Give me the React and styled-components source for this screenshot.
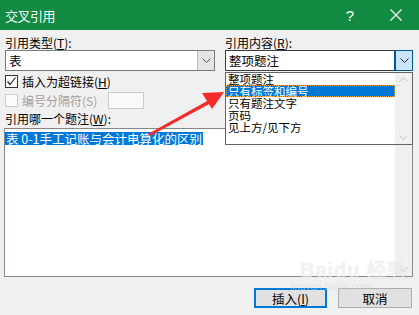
import React from 'react'
import styled, { createGlobalStyle } from 'styled-components'

const GlobalStyle = createGlobalStyle`
  html, body {
    margin: 0;
    padding: 0;
    background: #f0f0f0;
  }
  body {
    font-family: "Noto Sans CJK SC", "Microsoft YaHei", sans-serif;
  }
`

const Dialog = styled.div`
  position: relative;
  width: 419px;
  height: 315px;
  background: #f0f0f0;
  overflow: hidden;
  font-size: 12px;
  color: #000;
`

const TitleBar = styled.div`
  display: flex;
  align-items: center;
  height: 30px;
  background: #138a42;
  color: #fff;
  padding-left: 5px;
`

const TitleText = styled.div`
  flex: 1;
  font-size: 13px;
  letter-spacing: -0.5px;
`

const TitleButton = styled.div`
  width: 46px;
  height: 30px;
  display: flex;
  align-items: center;
  justify-content: center;
  font-family: "Liberation Sans", sans-serif;
  font-size: 15px;
`

const Body = styled.div`
  padding: 6px 6px 0 4px;
  display: flex;
  flex-direction: column;
`

const TopRow = styled.div`
  display: grid;
  grid-template-columns: 211px 188px;
  column-gap: 10px;
`

const Column = styled.div`
  position: relative;
  display: flex;
  flex-direction: column;
`

const Label = styled.div`
  height: 14px;
  line-height: 14px;
  padding-left: ${({ $indent }) => $indent || 0}px;
  margin-top: ${({ $top }) => $top || 0}px;
  white-space: nowrap;
  color: ${({ $disabled }) => ($disabled ? '#a0a0a0' : '#000')};
`

const Combo = styled.div`
  display: flex;
  height: 21px;
  box-sizing: border-box;
  margin-left: ${({ $indent }) => $indent || 0}px;
  border: 1px solid ${({ $focused }) => ($focused ? '#3c3c3c' : '#7a7a7a')};
  background: #fff;
`

const ComboValue = styled.div`
  flex: 1;
  padding-left: 3px;
  line-height: 19px;
  font-size: 12.5px;
`

const ComboButton = styled.div`
  width: 17px;
  display: flex;
  align-items: center;
  justify-content: center;
  box-sizing: border-box;
  background: ${({ $active }) => ($active ? '#cce4f7' : '#e5e5e5')};
  border-left: 1px solid ${({ $active }) => ($active ? '#005499' : '#b9b9b9')};
  outline: ${({ $active }) => ($active ? '1px solid #005499' : 'none')};
`

const Popup = styled.div`
  position: absolute;
  top: 36px;
  left: 0;
  width: 188px;
  height: 73px;
  box-sizing: border-box;
  border: 1px solid #646464;
  background: #fff;
  display: flex;
  z-index: 2;
`

const PopupItems = styled.div`
  flex: 1;
  display: flex;
  flex-direction: column;
`

const PopupItem = styled.div`
  height: 12px;
  line-height: 12px;
  padding-left: 2px;
  font-size: 11.5px;
  box-sizing: border-box;
  white-space: nowrap;
  background: ${({ $selected }) => ($selected ? '#0078d7' : 'transparent')};
  color: ${({ $selected }) => ($selected ? '#fff' : '#000')};
  outline: ${({ $selected }) => ($selected ? '1px dotted #f7a13a' : 'none')};
  outline-offset: -1px;
`

const ScrollBar = styled.div`
  width: 17px;
  background: #f0f0f0;
  display: flex;
  flex-direction: column;
  justify-content: ${({ $onlyDown }) => ($onlyDown ? 'flex-end' : 'space-between')};
  align-items: center;
  padding: 4px 0;
  box-sizing: border-box;
`

const CheckRow = styled.div`
  display: flex;
  align-items: center;
  height: ${({ $h }) => $h}px;
  margin-top: ${({ $top }) => $top}px;
  padding-left: 1px;
`

const Box = styled.div`
  width: 13px;
  height: 13px;
  box-sizing: border-box;
  border: 1px solid ${({ $disabled }) => ($disabled ? '#cccccc' : '#333')};
  background: ${({ $disabled }) => ($disabled ? '#fcfcfc' : '#fff')};
  display: flex;
  align-items: center;
  justify-content: center;
  margin-right: 4px;
`

const SepInput = styled.div`
  width: 36px;
  height: 17px;
  box-sizing: border-box;
  margin-left: 11px;
  border: 1px solid #cccccc;
  background: #f9f9f9;
`

const ListBox = styled.div`
  display: flex;
  height: 149px;
  margin-top: 2px;
  box-sizing: border-box;
  border: 1px solid #828790;
  background: #fff;
`

const ListItems = styled.div`
  flex: 1;
  padding: 1px 0 0 0;
`

const ListItem = styled.span`
  display: inline-block;
  height: 13px;
  line-height: 13px;
  padding: 0 1px;
  font-size: 12.5px;
  background: #0078d7;
  color: #fff;
  white-space: pre;
`

const ButtonRow = styled.div`
  display: flex;
  justify-content: flex-end;
  gap: 11px;
  margin-top: 11px;
  margin-right: 1px;
`

const Button = styled.div`
  width: ${({ $w }) => $w}px;
  height: 20px;
  box-sizing: border-box;
  display: flex;
  align-items: center;
  justify-content: center;
  background: #e1e1e1;
  border: ${({ $default }) => ($default ? '2px solid #0078d7' : '1px solid #adadad')};
  font-size: 12.5px;
`

const Overlay = styled.svg`
  position: absolute;
  left: 0;
  top: 0;
  pointer-events: none;
  z-index: 3;
`

const Watermark = styled.div`
  position: absolute;
  left: 300px;
  top: 260px;
  font-family: "Liberation Sans", sans-serif;
  color: rgba(255, 255, 255, 0.55);
  text-shadow: 0 0 1px rgba(170, 170, 170, 0.35);
  pointer-events: none;
  z-index: 3;
  line-height: 1;
`

const WmBig = styled.div`
  font-size: 20px;
  font-weight: bold;
  letter-spacing: 1px;
`

const WmSmall = styled.div`
  font-size: 10px;
  margin-top: 2px;
  margin-left: -10px;
  color: rgba(215, 215, 215, 0.55);
  text-shadow: none;
`

const Chevron = ({ up, color = '#333' }) => (
  <svg width="9" height="5" viewBox="0 0 9 5">
    <path
      d={up ? 'M0.5 4.5 L4.5 0.5 L8.5 4.5' : 'M0.5 0.5 L4.5 4.5 L8.5 0.5'}
      fill="none"
      stroke={color}
      strokeWidth="1"
    />
  </svg>
)

const Check = () => (
  <svg width="11" height="11" viewBox="0 0 11 11">
    <path d="M1.5 5.5 L4 8.5 L9.5 1.5" fill="none" stroke="#222" strokeWidth="1.2" />
  </svg>
)

const u = (c) => <u>{c}</u>

export default function App() {
  return (
    <>
      <GlobalStyle />
      <Dialog>
        <TitleBar>
          <TitleText>交叉引用</TitleText>
          <TitleButton>?</TitleButton>
          <TitleButton>
            <svg width="12" height="12" viewBox="0 0 12 12">
              <path d="M0.5 0.5 L11.5 11.5 M11.5 0.5 L0.5 11.5" stroke="#fff" strokeWidth="1.1" />
            </svg>
          </TitleButton>
        </TitleBar>
        <Body>
          <TopRow>
            <Column>
              <Label $indent={1}>引用类型({u('T')}):</Label>
              <Combo $indent={1}>
                <ComboValue>表</ComboValue>
                <ComboButton>
                  <Chevron color="#555" />
                </ComboButton>
              </Combo>
              <CheckRow $h={15} $top={3}>
                <Box>
                  <Check />
                </Box>
                插入为超链接({u('H')})
              </CheckRow>
              <CheckRow $h={17} $top={3}>
                <Box $disabled />
                <Label $disabled>编号分隔符(S)</Label>
                <SepInput />
              </CheckRow>
            </Column>
            <Column>
              <Label>引用内容({u('R')}):</Label>
              <Combo $focused>
                <ComboValue>整项题注</ComboValue>
                <ComboButton $active>
                  <Chevron color="#222" />
                </ComboButton>
              </Combo>
              <Popup>
                <PopupItems>
                  <PopupItem>整项题注</PopupItem>
                  <PopupItem $selected>只有标签和编号</PopupItem>
                  <PopupItem>只有题注文字</PopupItem>
                  <PopupItem>页码</PopupItem>
                  <PopupItem>见上方/见下方</PopupItem>
                </PopupItems>
                <ScrollBar>
                  <Chevron up color="#c0c0c0" />
                  <Chevron color="#c0c0c0" />
                </ScrollBar>
              </Popup>
            </Column>
          </TopRow>
          <Label $indent={1} $top={3}>引用哪一个题注({u('W')}):</Label>
          <ListBox>
            <ListItems>
              <ListItem>表 0-1手工记账与会计电算化的区别</ListItem>
            </ListItems>
            <ScrollBar $onlyDown>
              <Chevron color="#c0c0c0" />
            </ScrollBar>
          </ListBox>
          <ButtonRow>
            <Button $w={73} $default>插入({u('I')})</Button>
            <Button $w={74}>取消</Button>
          </ButtonRow>
        </Body>
        <Overlay width="419" height="315" viewBox="0 0 419 315">
          <path d="M148 134 L209 100 L211 103 L150 136 Z" fill="#f52a2a" />
          <polygon points="224,92 202,93 212,109" fill="#f52a2a" />
        </Overlay>
        <Watermark>
          <WmBig>Baidu 经验</WmBig>
          <WmSmall>jingyan.baidu.com</WmSmall>
        </Watermark>
      </Dialog>
    </>
  )
}
